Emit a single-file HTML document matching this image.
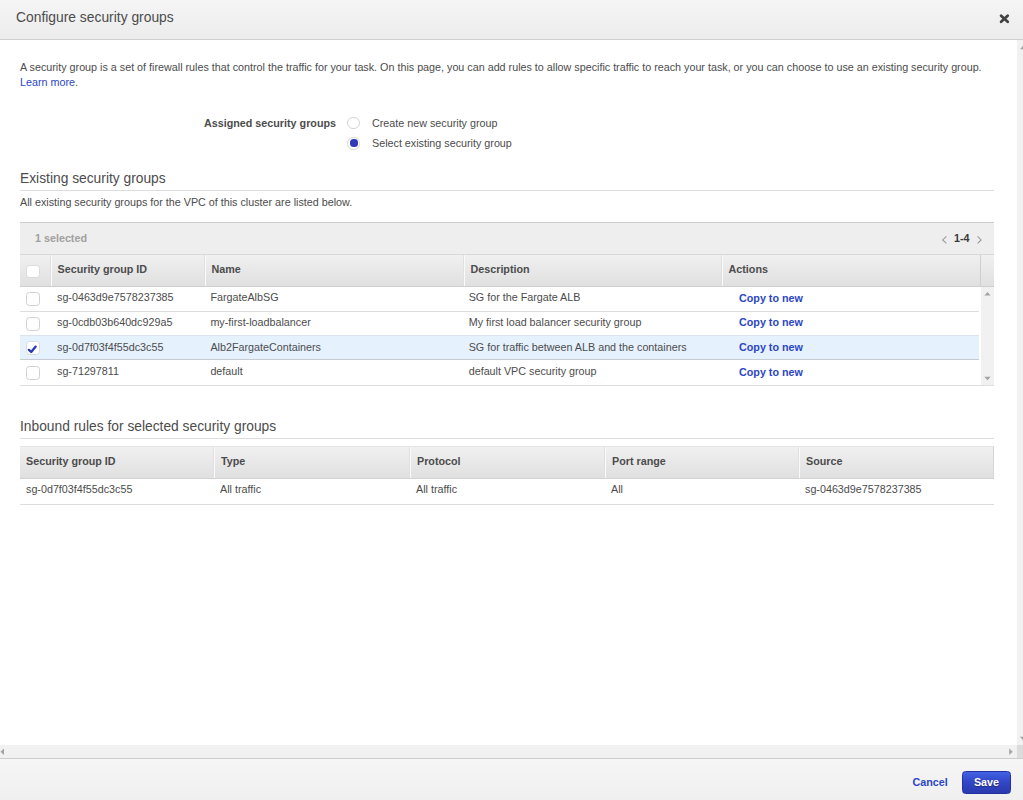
<!DOCTYPE html>
<html><head><meta charset="utf-8">
<style>
*{box-sizing:border-box;margin:0;padding:0}
html,body{width:1023px;height:800px;overflow:hidden;background:#fff}
body{font-family:"Liberation Sans",Arial,sans-serif;font-size:10.75px;color:#4c4c4c;position:relative}
.hdr{position:absolute;left:0;top:0;width:1023px;height:40px;background:linear-gradient(#f5f5f5,#ececec);border-bottom:1px solid #cfcfcf}
.hdr h1{position:absolute;left:16px;top:9px;font-size:13.85px;font-weight:normal;color:#4c4c4c;line-height:17px}
.body{position:absolute;left:0;top:40px;width:1017px;height:705px;background:#fff}
.vscroll{position:absolute;left:1017px;top:40px;width:6px;height:705px;background:#f1f1f1}
.hscroll{position:absolute;left:0;top:745px;width:1017px;height:13px;background:#f1f1f1}
.corner{position:absolute;left:1017px;top:745px;width:6px;height:13px;background:#dcdcdc}
.ftr{position:absolute;left:0;top:758px;width:1023px;height:42px;background:linear-gradient(#f6f6f6,#efefef);border-top:1px solid #ccc}
.abs{position:absolute;white-space:nowrap}
a{color:#2c46c4;text-decoration:none}
.h2{font-size:13.8px;color:#4c4c4c;line-height:17px}
.hr{position:absolute;left:20px;width:974px;height:1px;background:#ddd}
.radio{position:absolute;border-radius:50%;border:1px solid #d4d4d4;background:#fff}
.dot{position:absolute;left:350px;top:139px;width:8px;height:8px;border-radius:3.5px;background:#3038b8}
.toolbar{position:absolute;left:20px;top:222px;width:974px;height:32px;background:#eee;border-top:1px solid #ccc}
.thead{position:absolute;height:33px;background:linear-gradient(#f0f0f0,#e0e0e0);border-top:1px solid #d8d8d8;border-bottom:1px solid #cecece}
.th{position:absolute;top:0;height:31px;border-left:1px solid #fafafa;box-shadow:-1px 0 0 #e0e0e0;font-weight:bold;color:#4c4c4c;padding:8px 0 0 6px;line-height:13px}
.row{position:absolute;left:20px;width:959px;border-bottom:1px solid #ddd}
.row.sel{background:#e6f1fe;border-bottom:1px solid #c8ccd2;border-top:1px solid #dbe3ec}
.cb{position:absolute;width:13.7px;height:13.7px;border:1px solid #d0d0d0;border-radius:3.5px;background:#fff}
.t{position:absolute;white-space:nowrap;line-height:13px}
.b{font-weight:bold}
</style></head><body>
<div class="hdr"><h1>Configure security groups</h1>
<svg class="abs" style="left:996px;top:10px" width="18" height="18" viewBox="996 10 18 18"><path d="M1001.1 15.8 L1007.7 21.7 M1007.7 15.8 L1001.1 21.7" stroke="#424242" stroke-width="2.8" stroke-linecap="round"/></svg>
</div>
<div class="body"></div>
<div class="vscroll"></div>
<svg class="abs" style="left:1017px;top:42px" width="6" height="10" viewBox="0 0 6 10"><path d="M3 7.2 L6.5 3.2 L6.5 7.2Z" fill="#a3a3a3"/></svg>
<svg class="abs" style="left:1017px;top:733.8px" width="6" height="10" viewBox="0 0 6 10"><path d="M3 2.8 L6.5 6.8 L6.5 2.8Z" fill="#a3a3a3"/></svg>

<div class="t" style="left:20px;top:61px">A security group is a set of firewall rules that control the traffic for your task. On this page, you can add rules to allow specific traffic to reach your task, or you can choose to use an existing security group.</div>
<div class="t" style="left:20px;top:76px"><a>Learn more</a>.</div>

<div class="t b" style="left:204px;top:116.6px">Assigned security groups</div>
<div class="radio" style="left:347.4px;top:117px;width:12.2px;height:12.2px"></div>
<div class="t" style="left:372px;top:116.5px">Create new security group</div>
<div class="radio" style="left:347px;top:136.5px;width:13px;height:13px;border-color:#dcdcdc;box-shadow:0 0 1px rgba(0,0,0,.12)"></div>
<div class="dot"></div>
<div class="t" style="left:372px;top:137px">Select existing security group</div>

<div class="t h2" style="left:20px;top:171.5px">Existing security groups</div>
<div class="hr" style="top:190px"></div>
<div class="t" style="left:20px;top:196px">All existing security groups for the VPC of this cluster are listed below.</div>

<div class="toolbar"></div>
<div class="t b" style="left:35px;top:232px;color:#a0a0a0">1 selected</div>
<div class="t b" style="left:954px;top:231.5px;color:#3a3a3a">1-4</div>
<svg class="abs" style="left:941px;top:235px" width="7" height="10" viewBox="0 0 7 10"><path d="M5.4 1.3 L1.7 4.9 L5.4 8.4" fill="none" stroke="#9a9a9a" stroke-width="1.1"/></svg>
<svg class="abs" style="left:976px;top:235px" width="7" height="10" viewBox="0 0 7 10"><path d="M1.6 1.3 L5.1 4.9 L1.6 8.4" fill="none" stroke="#9a9a9a" stroke-width="1.1"/></svg>

<div class="thead" style="left:20px;top:254px;width:974px">
 <div class="th" style="left:30.5px;width:154px">Security group ID</div>
 <div class="th" style="left:184.5px;width:258px">Name</div>
 <div class="th" style="left:443.5px;width:259px">Description</div>
 <div class="th" style="left:701.5px;width:259px">Actions</div>
 <div class="th" style="left:960.5px;width:13px;border-left:none;box-shadow:-1px 0 0 #cfcfcf"></div>
</div>
<div class="cb" style="left:26px;top:264.6px;border-color:#dadada"></div>

<div style="position:absolute;left:981px;top:287px;width:13px;height:98px;background:#f1f1f1"></div>
<svg class="abs" style="left:984px;top:291px" width="8" height="5" viewBox="0 0 8 5"><path d="M0.4 4.4 L3.5 1 L6.6 4.4Z" fill="#a3a3a3"/></svg>
<svg class="abs" style="left:984px;top:375.5px" width="8" height="5" viewBox="0 0 8 5"><path d="M0.4 0.8 L3.5 4.2 L6.6 0.8Z" fill="#a3a3a3"/></svg>

<div class="row" style="top:287px;height:25px"></div>
<div class="row" style="top:312px;height:24px;border-bottom:none"></div>
<div class="row sel" style="top:335.3px;height:25px"></div>
<div class="row" style="top:361px;height:24px;border-bottom:none"></div>
<div class="hr" style="top:385px"></div>

<div class="cb" style="left:26px;top:292.3px"></div>
<div class="cb" style="left:26px;top:317px"></div>
<div class="cb" style="left:26px;top:341.2px;border-color:#d8dce2"></div>
<svg class="abs" style="left:26px;top:341px" width="14" height="14" viewBox="26 341 14 14"><path d="M28.9 349.9 L31.2 352 L35.7 346.6" fill="none" stroke="#2b36b4" stroke-width="2.3" stroke-linecap="round" stroke-linejoin="round"/></svg>
<div class="cb" style="left:26px;top:366.3px"></div>

<div class="t" style="left:57px;top:291.4px">sg-0463d9e7578237385</div>
<div class="t" style="left:210.4px;top:291.4px">FargateAlbSG</div>
<div class="t" style="left:468.7px;top:291.4px">SG for the Fargate ALB</div>
<div class="t b" style="left:739px;top:292px"><a>Copy to new</a></div>

<div class="t" style="left:57px;top:316px">sg-0cdb03b640dc929a5</div>
<div class="t" style="left:210.4px;top:316px">my-first-loadbalancer</div>
<div class="t" style="left:468.7px;top:316px">My first load balancer security group</div>
<div class="t b" style="left:739px;top:316px"><a>Copy to new</a></div>

<div class="t" style="left:57px;top:341px">sg-0d7f03f4f55dc3c55</div>
<div class="t" style="left:210.4px;top:341px">Alb2FargateContainers</div>
<div class="t" style="left:468.7px;top:341px">SG for traffic between ALB and the containers</div>
<div class="t b" style="left:739px;top:341px"><a>Copy to new</a></div>

<div class="t" style="left:57px;top:365px">sg-71297811</div>
<div class="t" style="left:210.4px;top:365px">default</div>
<div class="t" style="left:468.7px;top:365px">default VPC security group</div>
<div class="t b" style="left:739px;top:366px"><a>Copy to new</a></div>

<div class="t h2" style="left:20px;top:419.6px">Inbound rules for selected security groups</div>
<div class="hr" style="top:438px"></div>

<div class="thead" style="left:20px;top:446px;width:974px;border-top-color:#e4e4e4;border-bottom-color:#d2d2d2;border-right:1.5px solid #d6d6d6">
 <div class="th" style="left:0;width:194px;border-left:none;box-shadow:none">Security group ID</div>
 <div class="th" style="left:194px;width:196px">Type</div>
 <div class="th" style="left:390px;width:195px">Protocol</div>
 <div class="th" style="left:585px;width:194px">Port range</div>
 <div class="th" style="left:779px;width:194px">Source</div>
</div>
<div class="t" style="left:26px;top:483px">sg-0d7f03f4f55dc3c55</div>
<div class="t" style="left:220px;top:483px">All traffic</div>
<div class="t" style="left:416px;top:483px">All traffic</div>
<div class="t" style="left:611px;top:483px">All</div>
<div class="t" style="left:805px;top:483px">sg-0463d9e7578237385</div>
<div class="hr" style="top:504px"></div>

<div class="hscroll"></div>
<div class="corner"></div>
<svg class="abs" style="left:0.3px;top:748px" width="5" height="8" viewBox="0 0 5 8"><path d="M4 0.5 L0.5 3.7 L4 6.9Z" fill="#a3a3a3"/></svg>
<svg class="abs" style="left:1008px;top:748px" width="6" height="8" viewBox="0 0 6 8"><path d="M1.2 0.5 L4.7 3.7 L1.2 6.9Z" fill="#a3a3a3"/></svg>
<div class="ftr"></div>
<div class="t b" style="left:912.5px;top:776px"><a>Cancel</a></div>
<div class="abs b" style="left:962px;top:771px;width:49px;height:23px;border-radius:3.5px;background:linear-gradient(#4163e2,#3347c8 45%,#2a39ad);border:1px solid #2230a0;color:#fff;text-align:center;line-height:21px;text-shadow:0 1px 1px rgba(0,0,0,.35)">Save</div>
</body></html>
